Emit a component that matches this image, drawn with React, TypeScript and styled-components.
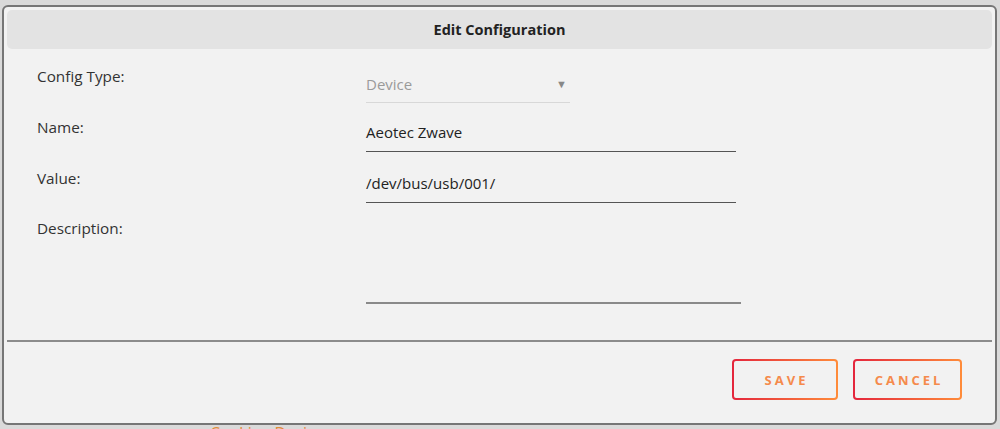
import React from "react";
import styled, { createGlobalStyle } from "styled-components";

const Global = createGlobalStyle`
  html, body { margin: 0; padding: 0; background: #dadada; }
  body { font-family: "Open Sans", "Noto Sans", sans-serif; color: #333; overflow: hidden; }
  * { box-sizing: border-box; }
`;

const Page = styled.div`
  width: 1000px;
  height: 429px;
  padding: 5px 0 0 2px;
  overflow: hidden;
`;

const Dialog = styled.div`
  width: 995px;
  height: 420px;
  background: #f2f2f2;
  border: 2px solid #767676;
  border-radius: 6px;
  display: flex;
  flex-direction: column;
`;

const Header = styled.div`
  margin: 3px 3px 0;
  height: 39px;
  flex-shrink: 0;
  background: #e3e3e3;
  border-radius: 5px;
  display: flex;
  align-items: center;
  justify-content: center;
  font-size: 14.5px;
  font-weight: 700;
  color: #222;
`;

const Form = styled.div`
  display: grid;
  grid-template-columns: 329px 1fr;
  grid-template-rows: 51px 51px 50px auto;
  padding: 14px 0 0 33px;
`;

const Label = styled.div`
  font-size: 15.3px;
  line-height: 26px;
  color: #333;
`;

const Field = styled.div<{ $width: number }>`
  width: ${(p) => p.$width}px;
  height: 38px;
  padding: 5px 0 7px;
  line-height: 26px;
  font-size: 15px;
  color: #222;
  border-bottom: 1px solid #555;
`;

const SelectBox = styled.div`
  width: 204px;
  height: 40px;
  padding: 8px 3px 6px 0;
  line-height: 26px;
  font-size: 15px;
  color: #9a9a9a;
  border-bottom: 1px solid #d8d8d8;
  display: flex;
  justify-content: space-between;
`;

const Arrow = styled.span`
  font-size: 11px;
  color: #888;
`;

const TextArea = styled.div`
  width: 375px;
  height: 89px;
  border-bottom: 2px solid #8a8a8a;
`;

const Separator = styled.div`
  margin: 36px 3px 0;
  height: 2px;
  flex-shrink: 0;
  background: #8c8c8c;
`;

const Actions = styled.div`
  display: flex;
  justify-content: flex-end;
  gap: 15px;
  padding: 17px 33px 0 0;
`;

const Button = styled.button<{ $width: number }>`
  width: ${(p) => p.$width}px;
  height: 41px;
  border: 2px solid transparent;
  border-radius: 4px;
  background: linear-gradient(#f2f2f2, #f2f2f2) padding-box,
    linear-gradient(90deg, #e4263d, #ff8c3a) border-box;
  color: #f58a4c;
  font-family: "Open Sans", sans-serif;
  font-weight: 700;
  font-size: 13px;
  letter-spacing: 3px;
  padding: 0 0 0 3px;
  cursor: pointer;
`;

const Behind = styled.div`
  margin: 0 0 0 208px;
  font-size: 16px;
  line-height: 16px;
  color: #e28b3a;
`;

export default function App() {
  return (
    <Page>
      <Global />
      <Dialog>
        <Header>Edit Configuration</Header>
        <Form>
          <Label>Config Type:</Label>
          <div>
            <SelectBox>
              <span>Device</span>
              <Arrow>▼</Arrow>
            </SelectBox>
          </div>
          <Label>Name:</Label>
          <div>
            <Field $width={370}>Aeotec Zwave</Field>
          </div>
          <Label>Value:</Label>
          <div>
            <Field $width={370}>/dev/bus/usb/001/</Field>
          </div>
          <Label>Description:</Label>
          <div>
            <TextArea />
          </div>
        </Form>
        <Separator />
        <Actions>
          <Button $width={106}>SAVE</Button>
          <Button $width={109}>CANCEL</Button>
        </Actions>
      </Dialog>
      <Behind>Cooking Devices</Behind>
    </Page>
  );
}
